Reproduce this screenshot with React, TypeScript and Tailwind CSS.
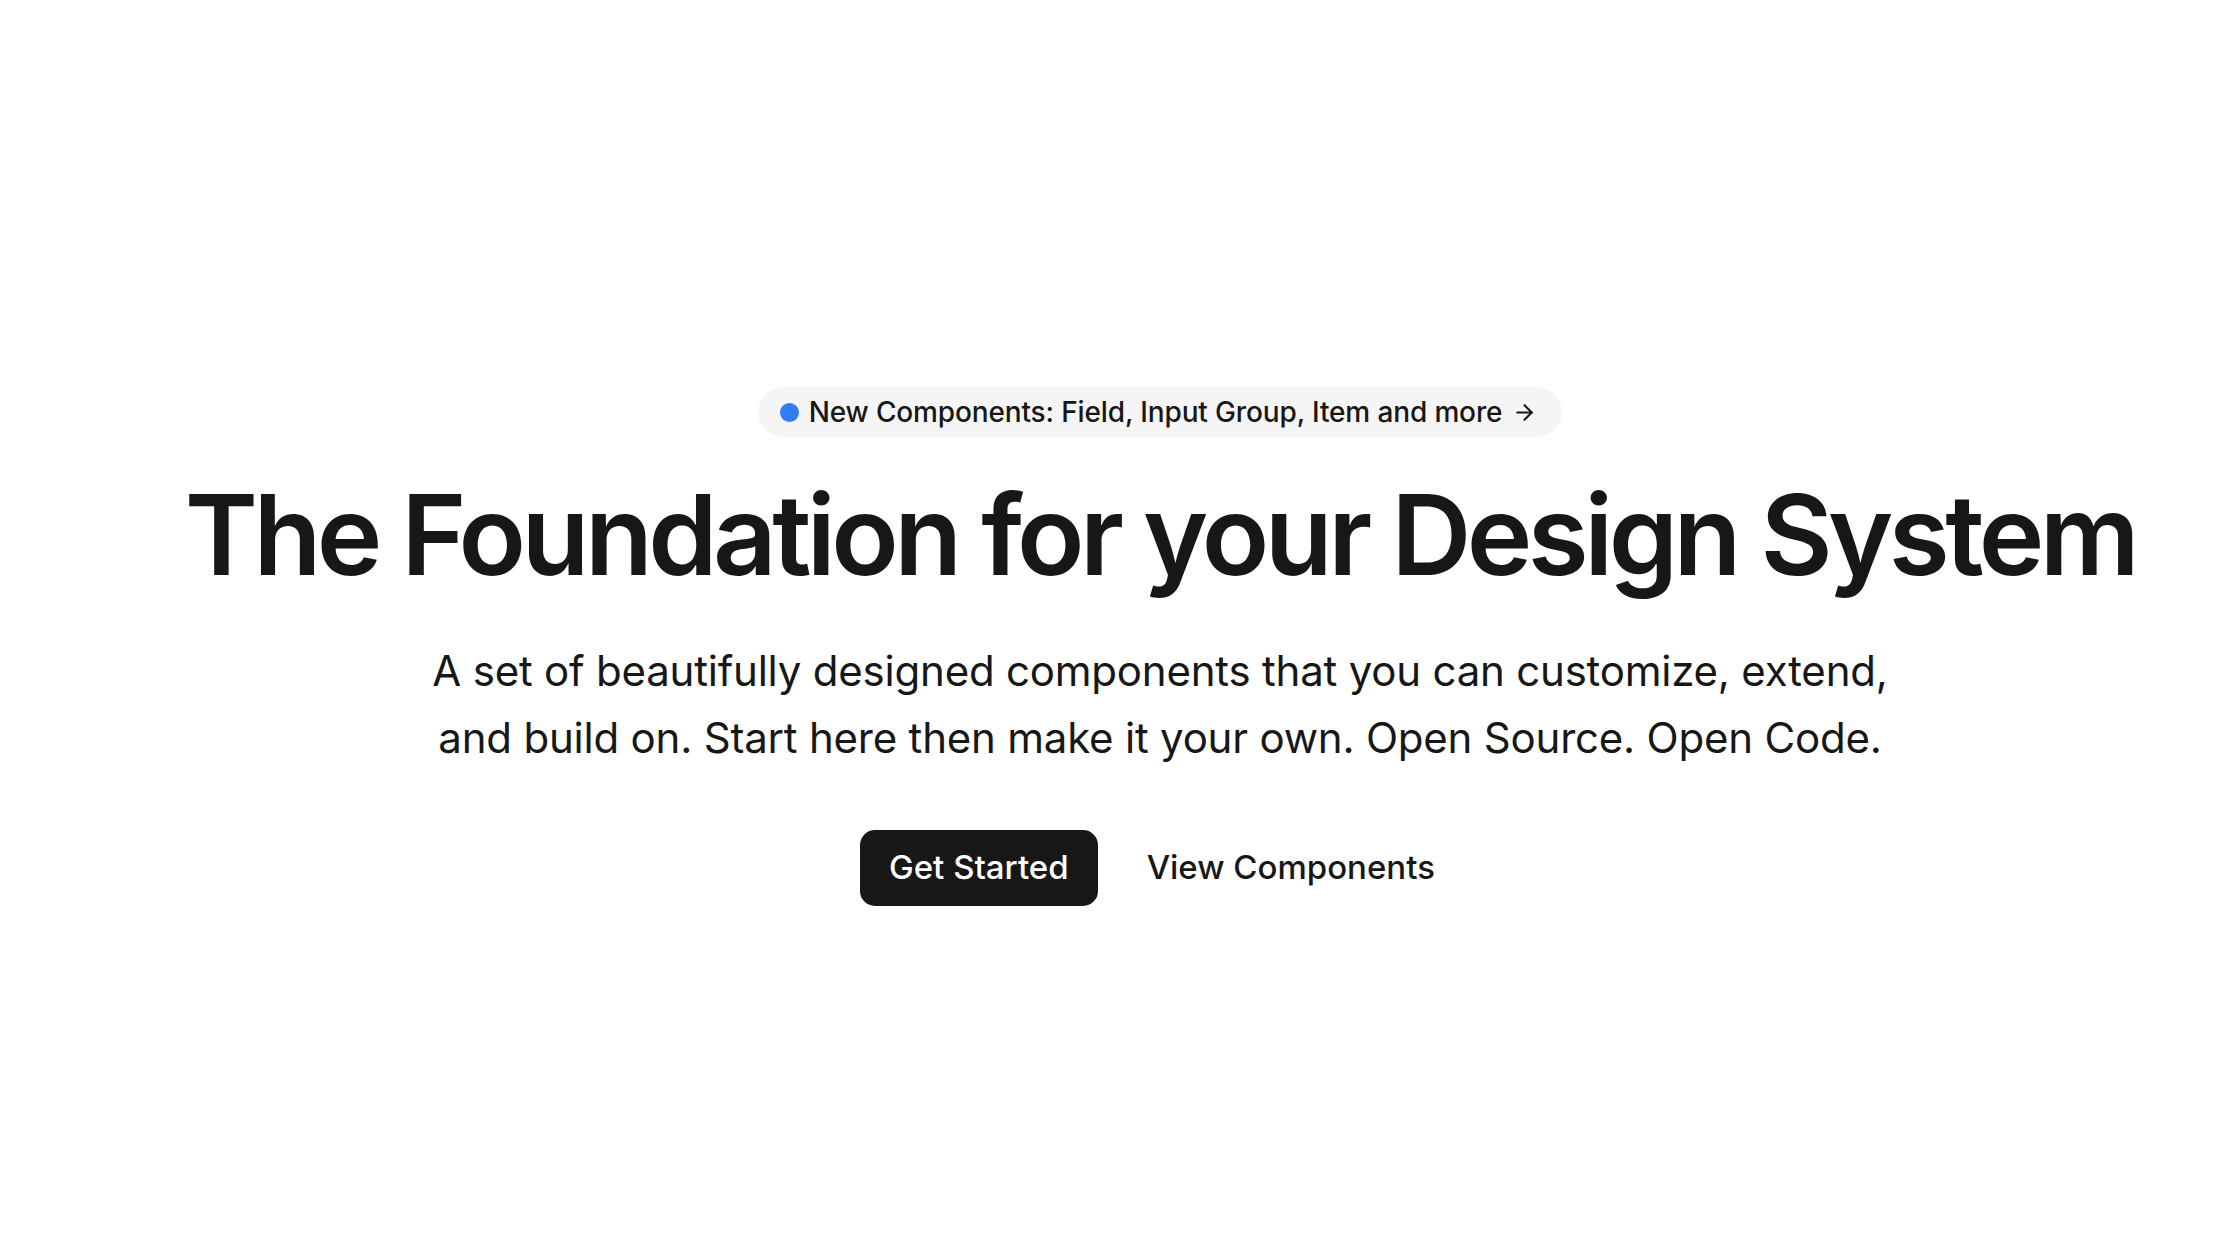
import { ArrowRight } from "lucide-react";

const App = () => {
  return (
    <div className="min-h-screen w-full bg-white pl-[80px] font-['Inter','Liberation_Sans',sans-serif] text-[#171717]">
      <section className="flex flex-col items-center pt-[387px]">
        <a
          href="#"
          className="flex h-[50px] items-center gap-[10px] rounded-full bg-[#f5f5f5] pl-[22px] pr-[25px] text-[28px] font-medium tracking-[-0.005em]"
        >
          <span className="size-[19px] rounded-full bg-[#2f7cf6]" />
          New Components: Field, Input Group, Item and more
          <ArrowRight className="size-[25px]" strokeWidth={2} />
        </a>

        <h1 className="mt-[34px] text-[111px] font-semibold leading-[1.15] tracking-[-0.041em]">
          The Foundation for your Design System
        </h1>

        <p className="mt-[38px] max-w-[1600px] text-center text-[42px] leading-[67px] tracking-[-0.005em]">
          A set of beautifully designed components that you can customize, extend,
          <br />
          and build on. Start here then make it your own. Open Source. Open Code.
        </p>

        <div className="mt-[59px] flex items-center gap-[20px] pl-[4px]">
          <button className="h-[76px] rounded-[15px] bg-[#171717] px-[29px] text-[33px] font-medium text-white">
            Get Started
          </button>
          <button className="h-[76px] rounded-[15px] px-[29px] text-[33px] font-medium">
            View Components
          </button>
        </div>
      </section>
    </div>
  );
};

export default App;
